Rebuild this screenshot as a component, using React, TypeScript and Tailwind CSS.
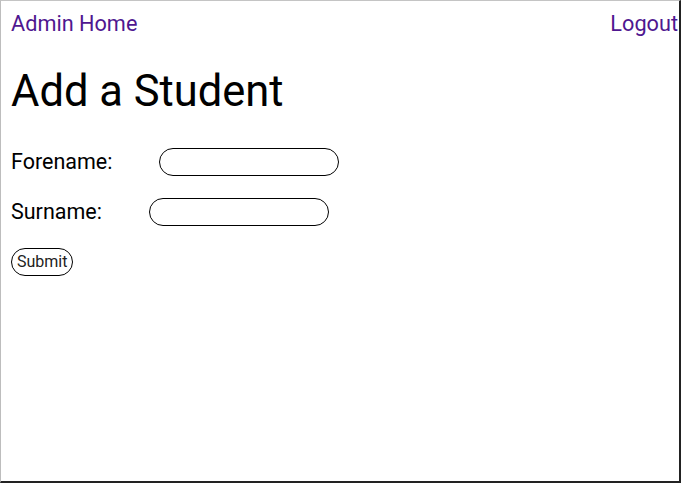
import React from 'react';

const App = () => {
  return (
    <div
      className="w-[681px] h-[483px] bg-white border-t border-l border-t-[#c4c4c4] border-l-[#bdbdbd] border-r-2 border-b-2 border-r-[#222] border-b-[#222] overflow-hidden text-black"
      style={{ fontFamily: 'Roboto, "Noto Sans", sans-serif' }}
    >
      {/* Nav */}
      <nav className="flex justify-between items-center pl-[10px] pr-[1px] pt-[9px] text-[21.7px] leading-[28px] text-[#4f1790]">
        <a href="#">Admin Home</a>
        <a href="#">Logout</a>
      </nav>

      <div className="pl-[10px]">
        <h1 className="mt-[28px] text-[43.5px] leading-[52px] font-normal">Add a Student</h1>

        <form className="mt-[30px]" onSubmit={e => e.preventDefault()}>
          <div className="flex items-center h-[28px] text-[21.5px]">
            <label htmlFor="forename">Forename:</label>
            <input id="forename" className="ml-[47px] w-[180px] h-[28px] rounded-full border-[1.5px] border-black outline-none px-3" />
          </div>
          <div className="flex items-center h-[28px] mt-[22px] text-[21.5px]">
            <label htmlFor="surname">Surname:</label>
            <input id="surname" className="ml-[47px] w-[180px] h-[28px] rounded-full border-[1.5px] border-black outline-none px-3" />
          </div>
          <button
            type="submit"
            className="mt-[22px] h-[28px] px-[5px] rounded-full border-[1.5px] border-black text-[16px] text-[#222] bg-white"
          >
            Submit
          </button>
        </form>
      </div>
    </div>
  );
};

export default App;
